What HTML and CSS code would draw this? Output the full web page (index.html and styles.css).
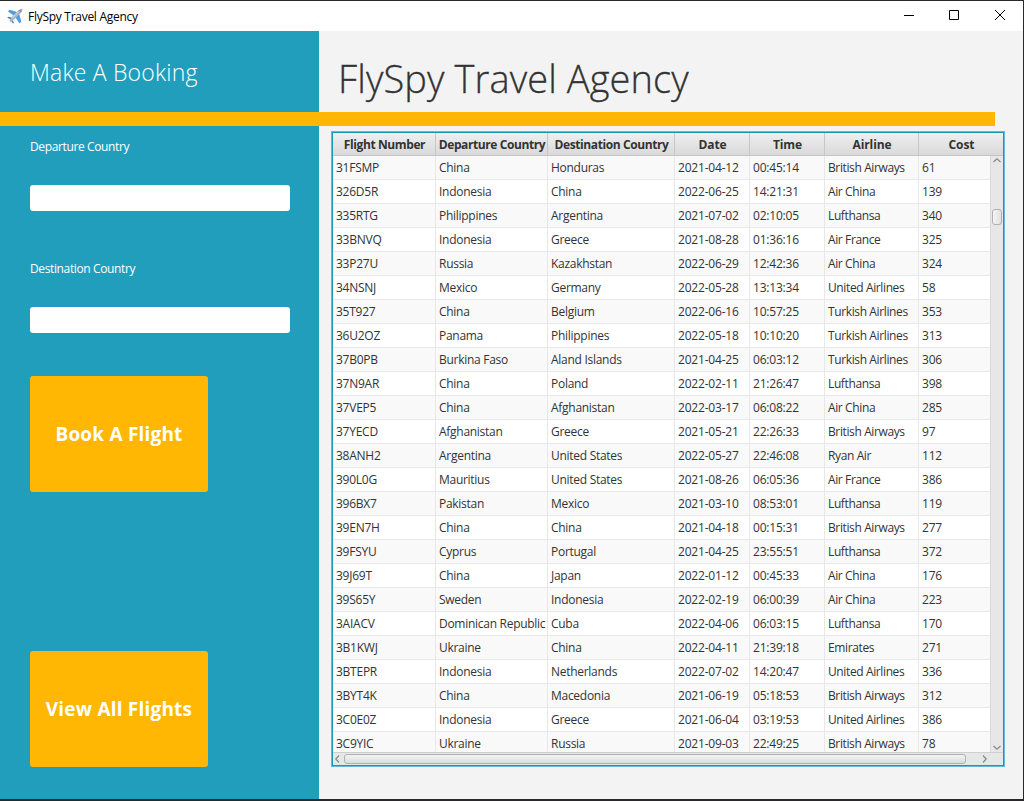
FILE: index.html
```html
<!DOCTYPE html>
<html lang="en">
<head>
<meta charset="utf-8">
<title>FlySpy Travel Agency</title>
<link rel="stylesheet" href="styles.css">
</head>
<body>
<div class="window">
  <header class="titlebar">
    <svg class="app-icon" width="16" height="16" viewBox="0 0 16 16">
      <path d="M.8 3.3 2.8 1.8 10 4 6.6 7.6zM12.2 6 14.3 13.4 12.6 15.4 8.4 9.4z" fill="#4f9fe0"/>
      <path d="M.2 9.8 1.4 8.8 5 9.4 3.8 11.4zM5 11.2 6.9 14.4 6 15.8 4 12.6z" fill="#3f86c8"/>
      <path d="M2.8 13.4C2.2 12.5 3 11.1 4.2 9.8L11 2.8C12.4 1.3 14.6.3 15.5.8 16 1.8 14.9 3.9 13.5 5.3L6.6 12C5.2 13.2 3.7 14.2 2.8 13.4z" fill="#a3b3c0"/>
      <path d="M5 10.6 11.6 3.8" stroke="#d3dde5" stroke-width="1"/>
      <path d="M12.6 2.2 14.2 3.8" stroke="#50606e" stroke-width=".9"/>
    </svg>
    <span class="app-name">FlySpy Travel Agency</span>
    <div class="controls">
      <svg width="46" height="30" viewBox="0 0 46 30"><path d="M18 14.5h10" stroke="#000" fill="none"/></svg>
      <svg width="46" height="30" viewBox="0 0 46 30"><path d="M17.5 9.5h9v9h-9z" stroke="#000" fill="none"/></svg>
      <svg width="46" height="30" viewBox="0 0 46 30"><path d="M17 9l10 10M27 9L17 19" stroke="#000" fill="none"/></svg>
    </div>
  </header>
  <div class="headings">
    <h2 class="side-title"><span>Make A Booking</span></h2>
    <h1 class="main-title"><span>FlySpy Travel Agency</span></h1>
  </div>
  <div class="rule"><div class="rule-fill"></div></div>
  <div class="content">
    <aside class="sidebar">
      <label class="label">Departure Country</label>
      <input class="field" type="text">
      <label class="label">Destination Country</label>
      <input class="field" type="text">
      <button class="action book">Book A Flight</button>
      <button class="action view">View All Flights</button>
    </aside>
    <main class="main">
      <div class="table-view">
        <div class="head">
          <span>Flight Number</span><span>Departure Country</span><span>Destination Country</span><span>Date</span><span>Time</span><span>Airline</span><span>Cost</span>
        </div>
        <div class="viewport">
          <table class="flights">
            <colgroup><col class="c1"><col class="c2"><col class="c3"><col class="c4"><col class="c4"><col class="c6"><col class="c7"></colgroup>
            <tr><td>31FSMP<td>China<td>Honduras<td>2021-04-12<td>00:45:14<td>British Airways<td>61</tr>
            <tr><td>326D5R<td>Indonesia<td>China<td>2022-06-25<td>14:21:31<td>Air China<td>139</tr>
            <tr><td>335RTG<td>Philippines<td>Argentina<td>2021-07-02<td>02:10:05<td>Lufthansa<td>340</tr>
            <tr><td>33BNVQ<td>Indonesia<td>Greece<td>2021-08-28<td>01:36:16<td>Air France<td>325</tr>
            <tr><td>33P27U<td>Russia<td>Kazakhstan<td>2022-06-29<td>12:42:36<td>Air China<td>324</tr>
            <tr><td>34NSNJ<td>Mexico<td>Germany<td>2022-05-28<td>13:13:34<td>United Airlines<td>58</tr>
            <tr><td>35T927<td>China<td>Belgium<td>2022-06-16<td>10:57:25<td>Turkish Airlines<td>353</tr>
            <tr><td>36U2OZ<td>Panama<td>Philippines<td>2022-05-18<td>10:10:20<td>Turkish Airlines<td>313</tr>
            <tr><td>37B0PB<td>Burkina Faso<td>Aland Islands<td>2021-04-25<td>06:03:12<td>Turkish Airlines<td>306</tr>
            <tr><td>37N9AR<td>China<td>Poland<td>2022-02-11<td>21:26:47<td>Lufthansa<td>398</tr>
            <tr><td>37VEP5<td>China<td>Afghanistan<td>2022-03-17<td>06:08:22<td>Air China<td>285</tr>
            <tr><td>37YECD<td>Afghanistan<td>Greece<td>2021-05-21<td>22:26:33<td>British Airways<td>97</tr>
            <tr><td>38ANH2<td>Argentina<td>United States<td>2022-05-27<td>22:46:08<td>Ryan Air<td>112</tr>
            <tr><td>390L0G<td>Mauritius<td>United States<td>2021-08-26<td>06:05:36<td>Air France<td>386</tr>
            <tr><td>396BX7<td>Pakistan<td>Mexico<td>2021-03-10<td>08:53:01<td>Lufthansa<td>119</tr>
            <tr><td>39EN7H<td>China<td>China<td>2021-04-18<td>00:15:31<td>British Airways<td>277</tr>
            <tr><td>39FSYU<td>Cyprus<td>Portugal<td>2021-04-25<td>23:55:51<td>Lufthansa<td>372</tr>
            <tr><td>39J69T<td>China<td>Japan<td>2022-01-12<td>00:45:33<td>Air China<td>176</tr>
            <tr><td>39S65Y<td>Sweden<td>Indonesia<td>2022-02-19<td>06:00:39<td>Air China<td>223</tr>
            <tr><td>3AIACV<td>Dominican Republic<td>Cuba<td>2022-04-06<td>06:03:15<td>Lufthansa<td>170</tr>
            <tr><td>3B1KWJ<td>Ukraine<td>China<td>2022-04-11<td>21:39:18<td>Emirates<td>271</tr>
            <tr><td>3BTEPR<td>Indonesia<td>Netherlands<td>2022-07-02<td>14:20:47<td>United Airlines<td>336</tr>
            <tr><td>3BYT4K<td>China<td>Macedonia<td>2021-06-19<td>05:18:53<td>British Airways<td>312</tr>
            <tr><td>3C0E0Z<td>Indonesia<td>Greece<td>2021-06-04<td>03:19:53<td>United Airlines<td>386</tr>
            <tr><td>3C9YIC<td>Ukraine<td>Russia<td>2021-09-03<td>22:49:25<td>British Airways<td>78</tr>
          </table>
        </div>
        <div class="vbar">
          <svg width="12" height="12" viewBox="0 0 12 12"><path d="M2.5 6 6 2.8 9.5 6" class="arrow"/></svg>
          <div class="vthumb"></div>
          <svg width="12" height="12" viewBox="0 0 12 12"><path d="M2.5 6 6 9.2 9.5 6" class="arrow"/></svg>
        </div>
        <div class="hbar">
          <svg width="10" height="12" viewBox="0 0 10 12"><path d="M6 2.5 2.8 6 6 9.5" class="arrow"/></svg>
          <div class="hthumb"></div>
          <svg width="24" height="12" viewBox="0 0 24 12"><path d="M17 2.5 20.2 6 17 9.5" class="arrow"/></svg>
        </div>
      </div>
    </main>
  </div>
</div>
</body>
</html>
```
FILE: styles.css
```css
* { box-sizing: border-box; }
body {
  margin: 0;
  width: 1024px;
  height: 801px;
  overflow: hidden;
  background: #2b282c;
  font: 12px "Open Sans", "Noto Sans", sans-serif;
  color: #333;
}
.window {
  width: 1024px;
  height: 801px;
  border: solid #2b282c;
  border-width: 1px 1px 2px 0;
  background: #f3f3f3;
  display: flex;
  flex-direction: column;
}
.titlebar {
  height: 30px;
  flex: none;
  background: #fff;
  display: flex;
  align-items: center;
  padding-left: 7px;
}
.app-name {
  margin-left: 5px;
  color: #000;
  letter-spacing: -0.28px;
}
.controls { display: flex; margin: 0 -1px 0 auto; }
.controls svg { display: block; }
.headings { display: flex; height: 81px; flex: none; }
.side-title, .main-title { margin: 0; font-weight: 300; white-space: nowrap; }
.side-title {
  width: 319px;
  padding: 24px 0 0 30px;
  background: #219ebc;
  color: #fff;
  font-size: 23px;
  line-height: 34px;
  letter-spacing: 0.2px;
}
.main-title {
  padding: 19px 0 0 19px;
  font-size: 38px;
  line-height: 56px;
  letter-spacing: 0.1px;
  -webkit-text-stroke: 0.3px #333;
}
.rule {
  height: 14px;
  flex: none;
  background: linear-gradient(90deg, #219ebc 319px, #f3f3f3 319px);
}
.rule-fill { width: 995px; height: 14px; background: #ffb703; }
.content { display: flex; flex: 1; min-height: 0; }
.sidebar {
  width: 319px;
  background: #219ebc;
  padding: 12px 0 32px 30px;
  display: flex;
  flex-direction: column;
  align-items: flex-start;
}
.label { color: #fff; line-height: 18px; height: 17px; letter-spacing: -0.37px; }
.field {
  width: 260px;
  height: 26px;
  flex: none;
  margin: 30px 0 49px;
  border: 0;
  border-radius: 3px;
  background: #fff;
}
.action {
  width: 178px;
  height: 116px;
  flex: none;
  padding: 0;
  border: 0;
  border-radius: 3px;
  background: #ffb703;
  color: #fff;
  font: bold 19px "Open Sans", sans-serif;
  letter-spacing: 0.2px;
}
.book { margin-top: -6px; }
.view { margin-top: auto; }
.main { padding: 5px 0 0 12px; }
.table-view {
  width: 674px;
  height: 636px;
  border: 1px solid #62bbd8;
  outline: 1px solid #1f93b8;
  outline-offset: -2px;
  padding: 1px;
  display: grid;
  grid-template: 23px 596px 13px / 657px 13px;
  background: #fff;
}
.head {
  grid-column: 1 / 3;
  display: grid;
  grid-template-columns: 103px 112px 127px 75px 75px 94px 84px;
  background: linear-gradient(#efefef, #d9d9d9);
  border-bottom: 1px solid #c4c4c4;
  font-weight: 700;
  line-height: 24px;
  text-align: center;
  letter-spacing: -0.4px;
  white-space: nowrap;
}
.head span { border-right: 1px solid #c6c6c6; padding-left: 1px; }
.head span:nth-child(n+4) { letter-spacing: -0.1px; }
.head span:last-child { border-right: 0; }
.viewport { overflow: hidden; }
.flights { width: 657px; table-layout: fixed; border-spacing: 0; }
.c1 { width: 103px; }
.c2 { width: 112px; }
.c3 { width: 127px; }
.c4 { width: 75px; }
.c6 { width: 94px; }
.c7 { width: 71px; }
.flights td {
  height: 24px;
  padding: 0 0 0 3px;
  border: solid #e8e8e8;
  border-width: 0 1px 1px 0;
  line-height: 23px;
  letter-spacing: -0.2px;
  white-space: nowrap;
}
.flights td:nth-child(1) { letter-spacing: -0.25px; }
.flights td:nth-child(2), .flights td:nth-child(3) { letter-spacing: -0.28px; }
.flights td:nth-child(6) { letter-spacing: -0.38px; }
.flights td:last-child { border-right: 0; }
.flights tr:nth-child(odd) { background: #f9f9f9; }
.vbar {
  background: #e7e7e7;
  border-left: 1px solid #dadada;
  display: flex;
  flex-direction: column;
}
.vbar svg:last-child { margin-top: auto; }
.vthumb {
  width: 10px;
  height: 16px;
  margin: 41px 0 0 1px;
  border: 1px solid #b0b0b0;
  border-radius: 3px;
  background: linear-gradient(90deg, #f4f4f4, #e0e0e0);
}
.hbar {
  grid-column: 1 / 3;
  background: #e7e7e7;
  border-top: 1px solid #cfcfcf;
  display: flex;
}
.hthumb {
  width: 622px;
  height: 10px;
  margin: 1px 0 0 1px;
  border: 1px solid #b0b0b0;
  border-radius: 3px;
  background: linear-gradient(#f4f4f4, #dcdcdc);
}
.arrow { fill: none; stroke: #888; stroke-width: 1.2; }
```
